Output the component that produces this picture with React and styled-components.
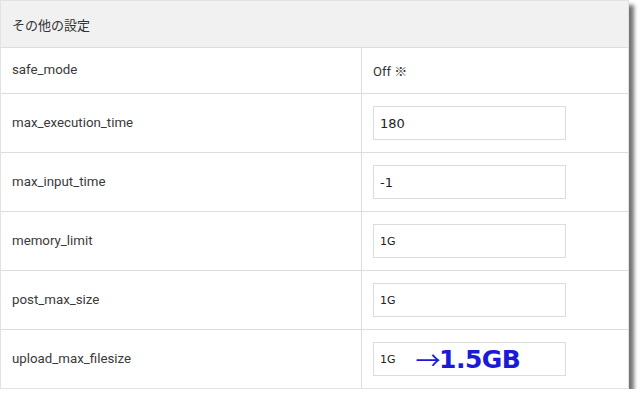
import React from "react";
import styled, { createGlobalStyle } from "styled-components";

const GlobalStyle = createGlobalStyle`
  html, body {
    margin: 0;
    padding: 0;
    background: #ffffff;
  }
  body {
    font-family: Roboto, "Noto Sans CJK JP", "Liberation Sans", sans-serif;
    color: #333333;
  }
`;

const Panel = styled.section`
  box-sizing: border-box;
  width: 629px;
  margin: 0;
  background: #ffffff;
  border: 1px solid #e2e2e2;
  box-shadow: 5px 5px 4px rgba(0, 0, 0, 0.55);
`;

const Heading = styled.div`
  box-sizing: border-box;
  height: 47px;
  display: flex;
  align-items: center;
  padding: 0 11px;
  background: #f1f1f1;
  border-bottom: 1px solid #dddddd;
  font-size: 13px;
  color: #333333;
  font-family: "Noto Sans CJK JP", sans-serif;
`;

const Row = styled.div`
  box-sizing: border-box;
  display: grid;
  grid-template-columns: 361px 1fr;
  height: ${(p) => p.$h}px;
  border-bottom: ${(p) => (p.$last ? "none" : "1px solid #dddddd")};
`;

const Label = styled.div`
  display: flex;
  align-items: center;
  padding-left: 11px;
  border-right: 1px solid #dddddd;
  font-size: 13.3px;
  color: #3a3a3a;
  padding-bottom: 2px;
`;

const Value = styled.div`
  display: flex;
  align-items: center;
  padding-left: 11px;
  font-size: 13px;
  color: #333333;
`;

const Field = styled.div`
  box-sizing: border-box;
  width: 193px;
  height: 34px;
  display: flex;
  align-items: center;
  padding-left: 6px;
  border: 1px solid #dcdcdc;
  background: #ffffff;
  font-family: "DejaVu Sans", Verdana, sans-serif;
  font-size: ${(p) => p.$size || 13}px;
  color: #222222;
`;

const Note = styled.span`
  display: flex;
  align-items: center;
  margin-left: 20px;
  font-family: "DejaVu Sans", Verdana, sans-serif;
  font-weight: bold;
  font-size: 25px;
  color: #1a1ad8;
  letter-spacing: -0.5px;
  line-height: 1;
`;

const Arrow = styled.span`
  font-family: "Noto Sans CJK JP", sans-serif;
  font-weight: normal;
  font-size: 25px;
  margin-right: -1px;
`;

const rows = [
  { name: "max_execution_time", value: "180" },
  { name: "max_input_time", value: "-1" },
  { name: "memory_limit", value: "1G", size: 11 },
  { name: "post_max_size", value: "1G", size: 11 },
];

export default function App() {
  return (
    <>
      <GlobalStyle />
      <Panel>
        <Heading>その他の設定</Heading>
        <Row $h={46}>
          <Label>safe_mode</Label>
          <Value>Off ※</Value>
        </Row>
        {rows.map((r) => (
          <Row key={r.name} $h={59}>
            <Label>{r.name}</Label>
            <Value>
              <Field $size={r.size}>{r.value}</Field>
            </Value>
          </Row>
        ))}
        <Row $h={58} $last>
          <Label>upload_max_filesize</Label>
          <Value>
            <Field $size={11}>
              1G
              <Note>
                <Arrow>→</Arrow>1.5GB
              </Note>
            </Field>
          </Value>
        </Row>
      </Panel>
    </>
  );
}
